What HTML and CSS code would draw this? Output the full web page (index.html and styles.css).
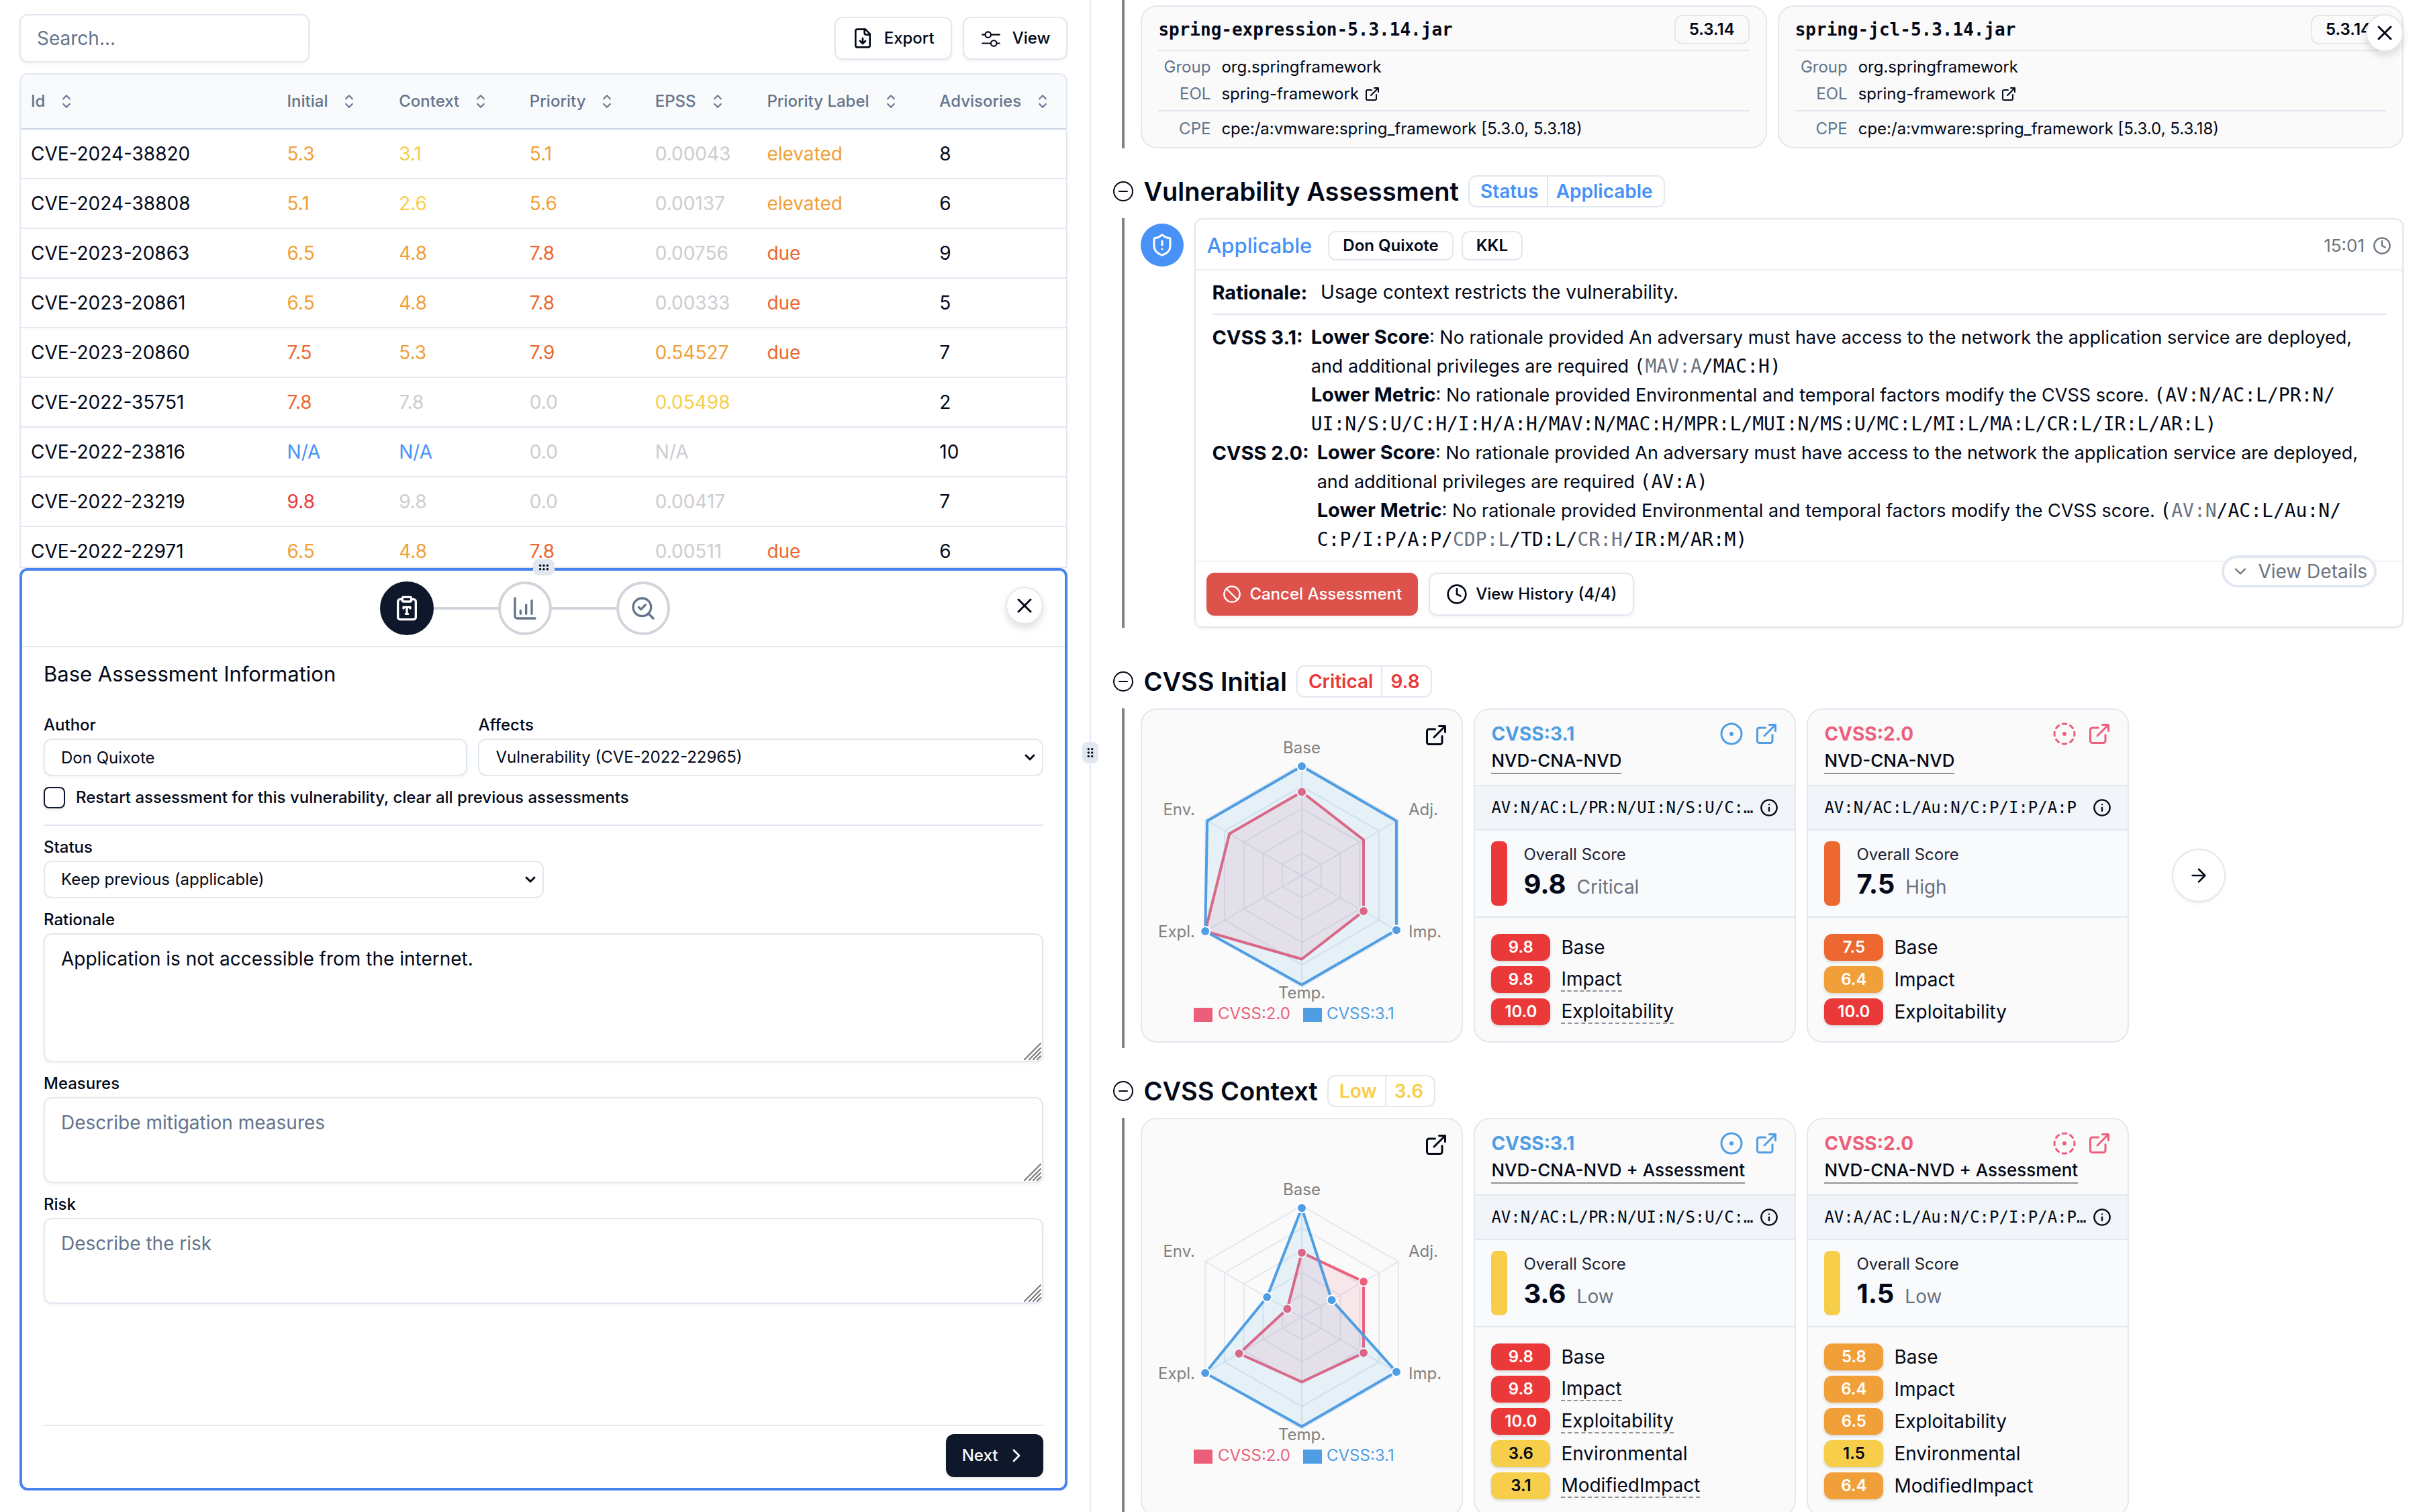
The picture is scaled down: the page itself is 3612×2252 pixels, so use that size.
FILE: index.html
```
<!DOCTYPE html>
<html lang="en">
<head>
<meta charset="utf-8">
<title>Vulnerability Assessment</title>
<link rel="stylesheet" href="styles.css">
</head>
<body>
<svg class="sprite" aria-hidden="true">
  <symbol id="i-sort" viewBox="0 0 15 15"><path fill="none" stroke="currentColor" stroke-width=".95" stroke-linecap="round" stroke-linejoin="round" d="M5.2 5.7 7.5 3.4l2.3 2.3M5.2 9.3l2.3 2.3 2.3-2.3"/></symbol>
  <symbol id="i-file" viewBox="0 0 24 24"><path d="M15 2H6a2 2 0 0 0-2 2v16a2 2 0 0 0 2 2h12a2 2 0 0 0 2-2V7Z"/><path d="M14 2v4a2 2 0 0 0 2 2h4M12 18v-6M9 15l3 3 3-3"/></symbol>
  <symbol id="i-mixer" viewBox="0 0 15 15"><path stroke-width="1" d="M1.5 5h2M7.5 5h6M1.5 11h6M11.5 11h2"/><circle cx="5.5" cy="5" r="2" stroke-width="1"/><circle cx="9.5" cy="11" r="2" stroke-width="1"/></symbol>
  <symbol id="i-clip" viewBox="0 0 24 24"><rect x="8" y="2" width="8" height="4" rx="1"/><path d="M16 4h2a2 2 0 0 1 2 2v14a2 2 0 0 1-2 2H6a2 2 0 0 1-2-2V6a2 2 0 0 1 2-2h2M9 12v-1h6v1M11 17h2M12 11v6"/></symbol>
  <symbol id="i-chart" viewBox="0 0 24 24"><path d="M13 17V9M18 17V5M3 3v16a2 2 0 0 0 2 2h16M8 17v-3"/></symbol>
  <symbol id="i-check" viewBox="0 0 24 24"><path d="m8 11 2 2 4-4M21 21l-4.3-4.3"/><circle cx="11" cy="11" r="8"/></symbol>
  <symbol id="i-x" viewBox="0 0 24 24"><path d="M18 6 6 18M6 6l12 12"/></symbol>
  <symbol id="i-down" viewBox="0 0 24 24"><path d="m6 9 6 6 6-6"/></symbol>
  <symbol id="i-right" viewBox="0 0 24 24"><path d="m9 18 6-6-6-6"/></symbol>
  <symbol id="i-arrow" viewBox="0 0 24 24"><path d="M5 12h14M12 5l7 7-7 7"/></symbol>
  <symbol id="i-open" viewBox="0 0 24 24"><path d="M15 3h6v6M10 14 21 3M18 13v6a2 2 0 0 1-2 2H5a2 2 0 0 1-2-2V8a2 2 0 0 1 2-2h6"/></symbol>
  <symbol id="i-minus" viewBox="0 0 32 32"><circle cx="16" cy="16" r="14" stroke-width="2"/><path stroke-width="2" d="M10 16h12"/></symbol>
  <symbol id="i-shield" viewBox="0 0 24 24"><path d="M20 13c0 5-3.5 7.5-7.66 8.95a1 1 0 0 1-.67-.01C7.5 20.5 4 18 4 13V6a1 1 0 0 1 1-1c2 0 4.5-1.2 6.24-2.72a1.17 1.17 0 0 1 1.52 0C14.51 3.81 17 5 19 5a1 1 0 0 1 1 1zM12 8v4M12 16h.01"/></symbol>
  <symbol id="i-clock" viewBox="0 0 24 24"><circle cx="12" cy="12" r="10"/><path d="M12 6v6l4 2"/></symbol>
  <symbol id="i-ban" viewBox="0 0 24 24"><circle cx="12" cy="12" r="10"/><path d="m4.9 4.9 14.2 14.2"/></symbol>
  <symbol id="i-info" viewBox="0 0 24 24"><circle cx="12" cy="12" r="10"/><path d="M12 16v-4M12 8h.01"/></symbol>
  <symbol id="i-dot" viewBox="0 0 24 24"><circle cx="12" cy="12" r="10"/><circle cx="12" cy="12" r="1"/></symbol>
  <symbol id="i-dash" viewBox="0 0 24 24"><path d="M10.1 2.18a9.93 9.93 0 0 1 3.8 0M17.6 3.71a9.95 9.95 0 0 1 2.69 2.7M21.82 10.1a9.93 9.93 0 0 1 0 3.8M20.29 17.6a9.95 9.95 0 0 1-2.7 2.69M13.9 21.82a9.94 9.94 0 0 1-3.8 0M6.4 20.29a9.95 9.95 0 0 1-2.69-2.7M2.18 13.9a9.93 9.93 0 0 1 0-3.8M3.71 6.4a9.95 9.95 0 0 1 2.7-2.69"/><circle cx="12" cy="12" r="1"/></symbol>
  <symbol id="i-grip" viewBox="0 0 16 12"><g fill="currentColor" stroke="none"><circle cx="2.6" cy="3.3" r="1.7"/><circle cx="8" cy="3.3" r="1.7"/><circle cx="13.4" cy="3.3" r="1.7"/><circle cx="2.6" cy="8.7" r="1.7"/><circle cx="8" cy="8.7" r="1.7"/><circle cx="13.4" cy="8.7" r="1.7"/></g></symbol>
  <symbol id="i-size" viewBox="0 0 26 26"><path stroke-width="2" d="M1 25 25 1M8 25 25 8M14 25l11-11M20 25l5-5"/></symbol>
  <symbol id="radar" viewBox="-220 -220 440 440"><g fill="none" stroke="#e2e8f0" stroke-width="2">
    <path d="M0-33.2 28.8-16.6V16.6L0 33.2-28.8 16.6V-16.6ZM0-66.4 57.5-33.2V33.2L0 66.4-57.5 33.2V-33.2ZM0-99.6 86.3-49.8V49.8L0 99.6-86.3 49.8V-49.8ZM0-132.8 115-66.4V66.4L0 132.8-115 66.4V-66.4ZM0-166 143.8-83V83L0 166-143.8 83V-83ZM0-166V166M-143.8-83 143.8 83M-143.8 83 143.8-83"/></g></symbol>
</svg>

<div class="app">
  <section class="left">
    <div class="list-panel">
      <div class="toolbar">
        <input class="search" type="text" placeholder="Search..." aria-label="Search">
        <button class="btn"><svg class="icon s32"><use href="#i-file"/></svg>Export</button>
        <button class="btn"><svg class="icon s32"><use href="#i-mixer"/></svg>View</button>
      </div>
      <div class="table-wrap">
        <table>
          <colgroup><col class="c-id"><col class="c-initial"><col class="c-context"><col class="c-priority"><col class="c-epss"><col class="c-label"><col></colgroup>
          <thead><tr>
            <th><span>Id<svg class="icon s32"><use href="#i-sort"/></svg></span></th>
            <th><span>Initial<svg class="icon s32"><use href="#i-sort"/></svg></span></th>
            <th><span>Context<svg class="icon s32"><use href="#i-sort"/></svg></span></th>
            <th><span>Priority<svg class="icon s32"><use href="#i-sort"/></svg></span></th>
            <th><span>EPSS<svg class="icon s32"><use href="#i-sort"/></svg></span></th>
            <th><span>Priority Label<svg class="icon s32"><use href="#i-sort"/></svg></span></th>
            <th><span>Advisories<svg class="icon s32"><use href="#i-sort"/></svg></span></th>
          </tr></thead>
          <tbody>
            <tr><td>CVE-2024-38820</td><td class="medium">5.3</td><td class="low">3.1</td><td class="medium">5.1</td><td class="none">0.00043</td><td class="medium">elevated</td><td>8</td></tr>
            <tr><td>CVE-2024-38808</td><td class="medium">5.1</td><td class="low">2.6</td><td class="medium">5.6</td><td class="none">0.00137</td><td class="medium">elevated</td><td>6</td></tr>
            <tr><td>CVE-2023-20863</td><td class="medium">6.5</td><td class="medium">4.8</td><td class="high">7.8</td><td class="none">0.00756</td><td class="high">due</td><td>9</td></tr>
            <tr><td>CVE-2023-20861</td><td class="medium">6.5</td><td class="medium">4.8</td><td class="high">7.8</td><td class="none">0.00333</td><td class="high">due</td><td>5</td></tr>
            <tr><td>CVE-2023-20860</td><td class="high">7.5</td><td class="medium">5.3</td><td class="high">7.9</td><td class="medium">0.54527</td><td class="high">due</td><td>7</td></tr>
            <tr><td>CVE-2022-35751</td><td class="high">7.8</td><td class="none">7.8</td><td class="none">0.0</td><td class="low">0.05498</td><td></td><td>2</td></tr>
            <tr><td>CVE-2022-23816</td><td class="info">N/A</td><td class="info">N/A</td><td class="none">0.0</td><td class="none">N/A</td><td></td><td>10</td></tr>
            <tr><td>CVE-2022-23219</td><td class="critical">9.8</td><td class="none">9.8</td><td class="none">0.0</td><td class="none">0.00417</td><td></td><td>7</td></tr>
            <tr><td>CVE-2022-22971</td><td class="medium">6.5</td><td class="medium">4.8</td><td class="high">7.8</td><td class="none">0.00511</td><td class="high">due</td><td>6</td></tr>
          </tbody>
        </table>
      </div>
    </div>

    <div class="editor-panel">
      <div class="grip grip-h"><svg class="icon dots"><use href="#i-grip"/></svg></div>
      <form class="editor" onsubmit="return false">
        <header class="editor-head">
          <div class="stepper">
            <span class="step active"><svg class="icon s40"><use href="#i-clip"/></svg></span>
            <span class="link"></span>
            <span class="step"><svg class="icon s40"><use href="#i-chart"/></svg></span>
            <span class="link"></span>
            <span class="step"><svg class="icon s40"><use href="#i-check"/></svg></span>
          </div>
          <button type="button" class="close" aria-label="Close editor"><svg class="icon s36"><use href="#i-x"/></svg></button>
        </header>
        <div class="editor-body">
          <h2>Base Assessment Information</h2>
          <div class="pair">
            <div class="field"><label for="author">Author</label><input id="author" type="text" value="Don Quixote"></div>
            <div class="field"><label for="affects">Affects</label><div class="select"><select id="affects"><option>Vulnerability (CVE-2022-22965)</option></select><svg class="icon s24"><use href="#i-down"/></svg></div></div>
          </div>
          <div class="tick"><input id="restart" type="checkbox"><label for="restart">Restart assessment for this vulnerability, clear all previous assessments</label></div>
          <hr>
          <div class="field half"><label for="status">Status</label><div class="select"><select id="status"><option>Keep previous (applicable)</option></select><svg class="icon s24"><use href="#i-down"/></svg></div></div>
          <div class="field"><label for="rationale">Rationale</label><div class="area tall"><textarea id="rationale">Application is not accessible from the internet.</textarea><svg class="icon size"><use href="#i-size"/></svg></div></div>
          <div class="field"><label for="measures">Measures</label><div class="area"><textarea id="measures" placeholder="Describe mitigation measures"></textarea><svg class="icon size"><use href="#i-size"/></svg></div></div>
          <div class="field"><label for="risk">Risk</label><div class="area"><textarea id="risk" placeholder="Describe the risk"></textarea><svg class="icon size"><use href="#i-size"/></svg></div></div>
          <footer class="editor-foot"><button type="submit" class="next">Next<svg class="icon s32"><use href="#i-right"/></svg></button></footer>
        </div>
      </form>
    </div>
  </section>

  <div class="divider"><div class="grip grip-v"><svg class="icon dots"><use href="#i-grip"/></svg></div></div>

  <main class="right">
    <button class="close page-close" aria-label="Close details"><svg class="icon s36"><use href="#i-x"/></svg></button>

    <section>
      <div class="section-body jars">
        <article class="card jar">
          <div class="jar-head"><h3>spring-expression-5.3.14.jar</h3><span class="badge">5.3.14</span></div>
          <dl><dt>Group</dt><dd>org.springframework</dd><dt>EOL</dt><dd><a href="#">spring-framework<svg class="icon s24"><use href="#i-open"/></svg></a></dd></dl>
          <dl class="cpe"><dt>CPE</dt><dd>cpe:/a:vmware:spring_framework [5.3.0, 5.3.18)</dd></dl>
        </article>
        <article class="card jar">
          <div class="jar-head"><h3>spring-jcl-5.3.14.jar</h3><span class="badge">5.3.14</span></div>
          <dl><dt>Group</dt><dd>org.springframework</dd><dt>EOL</dt><dd><a href="#">spring-framework<svg class="icon s24"><use href="#i-open"/></svg></a></dd></dl>
          <dl class="cpe"><dt>CPE</dt><dd>cpe:/a:vmware:spring_framework [5.3.0, 5.3.18)</dd></dl>
        </article>
      </div>
    </section>

    <section>
      <header class="section-head"><svg class="icon s32"><use href="#i-minus"/></svg><h2>Vulnerability Assessment</h2><div class="tag info"><span>Status</span><span>Applicable</span></div></header>
      <div class="section-body timeline">
        <span class="shield"><svg class="icon s36"><use href="#i-shield"/></svg></span>
        <article class="entry">
          <header class="entry-head"><strong>Applicable</strong><span class="badge">Don Quixote</span><span class="badge">KKL</span><time>15:01<svg class="icon s28"><use href="#i-clock"/></svg></time></header>
          <div class="entry-body">
            <div class="rationale"><b>Rationale:</b><span>Usage context restricts the vulnerability.</span></div>
            <div class="reasons">
              <div class="reason"><b>CVSS 3.1:</b>
                <div>
                  <p><b>Lower Score</b>: No rationale provided An adversary must have access to the network the application service are deployed, and additional privileges are required <code>(<i>MAV:A</i>/MAC:H)</code></p>
                  <p><b>Lower Metric</b>: No rationale provided Environmental and temporal factors modify the CVSS score. <code>(AV:N/AC:L/PR:N/<wbr>UI:N/S:U/C:H/I:H/A:H/MAV:N/MAC:H/MPR:L/MUI:N/MS:U/MC:L/MI:L/MA:L/CR:L/IR:L/AR:L)</code></p>
                </div>
              </div>
              <div class="reason"><b>CVSS 2.0:</b>
                <div>
                  <p><b>Lower Score</b>: No rationale provided An adversary must have access to the network the application service are deployed, and additional privileges are required <code>(AV:A)</code></p>
                  <p><b>Lower Metric</b>: No rationale provided Environmental and temporal factors modify the CVSS score. <code>(<i>AV:N</i>/AC:L/Au:N/<wbr>C:P/I:P/A:P/<i>CDP:L</i>/TD:L/<i>CR:H</i>/IR:M/AR:M)</code></p>
                </div>
              </div>
            </div>
          </div>
          <footer class="entry-foot">
            <button class="btn danger"><svg class="icon s28"><use href="#i-ban"/></svg>Cancel Assessment</button>
            <button class="btn tight"><svg class="icon s32"><use href="#i-clock"/></svg>View History (4/4)</button>
            <button class="details"><svg class="icon s28"><use href="#i-down"/></svg>View Details</button>
          </footer>
        </article>
      </div>
    </section>

    <section class="spaced">
      <header class="section-head"><svg class="icon s32"><use href="#i-minus"/></svg><h2>CVSS Initial</h2><div class="tag critical"><span>Critical</span><span>9.8</span></div></header>
      <div class="section-body scores">
        <article class="card chart">
          <a href="#" class="expand" aria-label="Open chart"><svg class="icon s36"><use href="#i-open"/></svg></a>
          <svg class="radar" viewBox="-220 -220 440 440">
            <use href="#radar" x="-220" y="-220" width="440" height="440"/>
            <path class="v2" d="M0-124.5 92-53.1V53.1L0 124.5-143.8 83-107.8-62.3Z"/>
            <g class="p2"><circle cx="0" cy="-124.5" r="7"/><circle cx="92" cy="53.1" r="7"/></g>
            <path class="v3" d="M0-162.7 140.9-81.3V81.3L0 162.7-143.8 83-140.9-81.3Z"/>
            <g class="p3"><circle cx="0" cy="-162.7" r="7"/><circle cx="140.9" cy="81.3" r="7"/><circle cx="-143.8" cy="83" r="7"/></g>
            <g class="axis"><text x="0" y="-182" text-anchor="middle">Base</text><text x="159" y="-90">Adj.</text><text x="159" y="92">Imp.</text><text x="0" y="183" text-anchor="middle">Temp.</text><text x="-159" y="92" text-anchor="end">Expl.</text><text x="-159" y="-90" text-anchor="end">Env.</text></g>
            <g class="legend"><rect class="k2" x="-161" y="197" width="28" height="21"/><text class="k2" x="-125" y="214">CVSS:2.0</text><rect class="k3" x="2" y="197" width="28" height="21"/><text class="k3" x="37" y="214">CVSS:3.1</text></g>
          </svg>
        </article>
        <article class="card score">
          <header class="blue"><div class="score-top"><b>CVSS:3.1</b><svg class="icon s36"><use href="#i-dot"/></svg><a href="#" aria-label="Open calculator"><svg class="icon s36"><use href="#i-open"/></svg></a></div><div class="source"><span>NVD-CNA-NVD</span></div></header>
          <div class="vector"><code>AV:N/AC:L/PR:N/UI:N/S:U/C:H/I:H/A:H</code><svg class="icon s28"><use href="#i-info"/></svg></div>
          <div class="overall"><span class="bar b-critical"></span><div><small>Overall Score</small><p><b>9.8</b>Critical</p></div></div>
          <ul><li><span class="pill b-critical">9.8</span><span>Base</span></li><li><span class="pill b-critical">9.8</span><abbr>Impact</abbr></li><li><span class="pill b-critical">10.0</span><abbr>Exploitability</abbr></li></ul>
        </article>
        <article class="card score">
          <header class="pink"><div class="score-top"><b>CVSS:2.0</b><svg class="icon s36"><use href="#i-dash"/></svg><a href="#" aria-label="Open calculator"><svg class="icon s36"><use href="#i-open"/></svg></a></div><div class="source"><span>NVD-CNA-NVD</span></div></header>
          <div class="vector"><code>AV:N/AC:L/Au:N/C:P/I:P/A:P</code><svg class="icon s28"><use href="#i-info"/></svg></div>
          <div class="overall"><span class="bar b-high"></span><div><small>Overall Score</small><p><b>7.5</b>High</p></div></div>
          <ul><li><span class="pill b-high">7.5</span><span>Base</span></li><li><span class="pill b-medium">6.4</span><span>Impact</span></li><li><span class="pill b-critical">10.0</span><span>Exploitability</span></li></ul>
        </article>
        <button class="forward" aria-label="Next scores"><svg class="icon s32"><use href="#i-arrow"/></svg></button>
      </div>
    </section>

    <section>
      <header class="section-head"><svg class="icon s32"><use href="#i-minus"/></svg><h2>CVSS Context</h2><div class="tag low"><span>Low</span><span>3.6</span></div></header>
      <div class="section-body scores">
        <article class="card chart">
          <a href="#" class="expand" aria-label="Open chart"><svg class="icon s36"><use href="#i-open"/></svg></a>
          <svg class="radar" viewBox="-220 -220 440 440">
            <use href="#radar" x="-220" y="-220" width="440" height="440"/>
            <path class="v2" d="M0-96.3 92-53.1V53.1L0 96.3-93.4 54-21.6-12.5Z"/>
            <g class="p2"><circle cx="0" cy="-96.3" r="7"/><circle cx="92" cy="-53.1" r="7"/><circle cx="92" cy="53.1" r="7"/><circle cx="-93.4" cy="54" r="7"/><circle cx="-21.6" cy="-12.5" r="7"/></g>
            <path class="v3" d="M0-162.7 44.6-25.7 140.9 81.3 0 162.7-143.8 83-51.8-29.9Z"/>
            <g class="p3"><circle cx="0" cy="-162.7" r="7"/><circle cx="44.6" cy="-25.7" r="7"/><circle cx="140.9" cy="81.3" r="7"/><circle cx="-143.8" cy="83" r="7"/><circle cx="-51.8" cy="-29.9" r="7"/></g>
            <g class="axis"><text x="0" y="-182" text-anchor="middle">Base</text><text x="159" y="-90">Adj.</text><text x="159" y="92">Imp.</text><text x="0" y="183" text-anchor="middle">Temp.</text><text x="-159" y="92" text-anchor="end">Expl.</text><text x="-159" y="-90" text-anchor="end">Env.</text></g>
            <g class="legend"><rect class="k2" x="-161" y="197" width="28" height="21"/><text class="k2" x="-125" y="214">CVSS:2.0</text><rect class="k3" x="2" y="197" width="28" height="21"/><text class="k3" x="37" y="214">CVSS:3.1</text></g>
          </svg>
        </article>
        <article class="card score">
          <header class="blue"><div class="score-top"><b>CVSS:3.1</b><svg class="icon s36"><use href="#i-dot"/></svg><a href="#" aria-label="Open calculator"><svg class="icon s36"><use href="#i-open"/></svg></a></div><div class="source"><span>NVD-CNA-NVD + Assessment</span></div></header>
          <div class="vector"><code>AV:N/AC:L/PR:N/UI:N/S:U/C:H/I:H/A:H</code><svg class="icon s28"><use href="#i-info"/></svg></div>
          <div class="overall"><span class="bar b-low"></span><div><small>Overall Score</small><p><b>3.6</b>Low</p></div></div>
          <ul><li><span class="pill b-critical">9.8</span><span>Base</span></li><li><span class="pill b-critical">9.8</span><abbr>Impact</abbr></li><li><span class="pill b-critical">10.0</span><abbr>Exploitability</abbr></li><li><span class="pill b-low">3.6</span><span>Environmental</span></li><li><span class="pill b-low">3.1</span><abbr>ModifiedImpact</abbr></li></ul>
        </article>
        <article class="card score">
          <header class="pink"><div class="score-top"><b>CVSS:2.0</b><svg class="icon s36"><use href="#i-dash"/></svg><a href="#" aria-label="Open calculator"><svg class="icon s36"><use href="#i-open"/></svg></a></div><div class="source"><span>NVD-CNA-NVD + Assessment</span></div></header>
          <div class="vector"><code>AV:A/AC:L/Au:N/C:P/I:P/A:P/CDP:L/TD:L</code><svg class="icon s28"><use href="#i-info"/></svg></div>
          <div class="overall"><span class="bar b-low"></span><div><small>Overall Score</small><p><b>1.5</b>Low</p></div></div>
          <ul><li><span class="pill b-medium">5.8</span><span>Base</span></li><li><span class="pill b-medium">6.4</span><span>Impact</span></li><li><span class="pill b-medium">6.5</span><span>Exploitability</span></li><li><span class="pill b-low">1.5</span><span>Environmental</span></li><li><span class="pill b-medium">6.4</span><span>ModifiedImpact</span></li></ul>
        </article>
      </div>
    </section>
  </main>
</div>
</body>
</html>
```
FILE: styles.css
```
:root {
  --line: #e2e8f0;
  --ink: #020817;
  --muted: #64748b;
  --critical: #eb3939;
  --high: #ed6730;
  --medium: #f19f39;
  --low: #f7ce49;
  --none: #cbcdd0;
  --info: #4891f7;
  --blue: #4f9de3;
  --pink: #ec5f7b;
  --mono: "DejaVu Sans Mono", "Liberation Mono", monospace;
}

* { box-sizing: border-box; margin: 0; padding: 0; }

body {
  font: 400 28px/40px Inter, "Liberation Sans", sans-serif;
  color: var(--ink);
  background: #fff;
}

button, input, select, textarea { font: inherit; color: inherit; }
a { color: inherit; text-decoration: none; }
.sprite { position: absolute; width: 0; height: 0; }

.icon { flex: none; fill: none; stroke: currentColor; stroke-width: 2; stroke-linecap: round; stroke-linejoin: round; }
.s24 { width: 24px; height: 24px; }
.s28 { width: 28px; height: 28px; }
.s32 { width: 32px; height: 32px; }
.s36 { width: 36px; height: 36px; }
.s40 { width: 40px; height: 40px; }

.app { display: flex; height: 100vh; overflow: hidden; }

/* Left: table above the assessment editor */
.left { flex: 0 0 45%; min-width: 0; display: flex; flex-direction: column; padding: 0 35px 32px 29px; }
.list-panel { flex: 846 1 0; min-height: 0; display: flex; flex-direction: column; gap: 16px; }
.toolbar { display: flex; align-items: center; gap: 16px; margin-top: 21px; }
.search { width: 432px; height: 72px; margin-right: auto; padding: 0 24px; }
.search, .field input, .field select, textarea {
  border: 2px solid var(--line); border-radius: 12px; background: #fff; box-shadow: 0 2px 4px rgba(0, 0, 0, .05);
}
::placeholder { color: var(--muted); opacity: 1; }

.btn {
  display: flex; align-items: center; gap: 16px; height: 64px; padding: 0 24px;
  border: 2px solid var(--line); border-radius: 12px; background: #fff;
  font-size: 24px; font-weight: 500; box-shadow: 0 2px 4px rgba(0, 0, 0, .06);
}
.btn.tight { gap: 12px; }
.btn.danger { gap: 12px; border: 0; background: #de524c; color: #fff; }

.table-wrap { flex: 1; min-height: 0; overflow: hidden; border: 2px solid var(--line); border-radius: 12px 12px 0 0; }
table { width: 100%; table-layout: fixed; border-collapse: separate; border-spacing: 0; }
.c-id { width: 24.5%; }
.c-initial { width: 10.7%; }
.c-context { width: 12.5%; }
.c-priority { width: 12%; }
.c-epss { width: 10.7%; }
.c-label { width: 16.5%; }
th { height: 82px; padding: 0 15px; background: #f8fafc; border-bottom: 2px solid #cbd5e1; color: var(--muted); font-size: 24px; font-weight: 500; text-align: left; }
th span { display: flex; align-items: center; gap: 16px; white-space: nowrap; }
td { height: 74px; padding: 0 15px; border-bottom: 2px solid var(--line); }

.critical { color: var(--critical); }
.high { color: var(--high); }
.medium { color: var(--medium); }
.low { color: var(--low); }
.none { color: var(--none); }
.info { color: var(--info); }

.editor-panel { flex: 1374 1 0; min-height: 0; position: relative; }
.editor { height: 100%; display: flex; flex-direction: column; border: 4px solid #4883ec; border-radius: 12px; background: #fff; }
.grip { position: absolute; display: flex; align-items: center; justify-content: center; border-radius: 8px; background: var(--line); }
.grip-h { width: 32px; height: 24px; top: -13px; left: calc(50% - 16px); z-index: 1; }
.grip-v { width: 24px; height: 32px; top: calc(50% - 21px); left: -11px; z-index: 1; }
.grip-v .dots { transform: rotate(90deg); }
.dots { width: 16px; height: 12px; }

.editor-head { display: flex; align-items: center; padding: 16px 32px; border-bottom: 2px solid var(--line); }
.editor-head .close { align-self: flex-start; margin-top: 8px; }
.stepper { flex: 1; display: flex; align-items: center; justify-content: center; }
.step { width: 80px; height: 80px; display: flex; align-items: center; justify-content: center; border: 4px solid #d1d5db; border-radius: 50%; color: var(--muted); }
.step.active { border-color: #0f172a; background: #0f172a; color: #fff; }
.link { width: 96px; height: 4px; background: #d1d5db; }
.close { width: 56px; height: 56px; display: flex; align-items: center; justify-content: center; border: 2px solid var(--line); border-radius: 50%; background: #fff; box-shadow: 0 6px 12px rgba(0, 0, 0, .12); }

.editor-body { flex: 1; min-height: 0; display: flex; flex-direction: column; padding: 16px 32px; }
.editor-body h2 { margin-bottom: 40px; font-size: 31px; line-height: 48px; font-weight: 400; }
.pair { display: grid; grid-template-columns: 3fr 4fr; gap: 16px; }
.pair .field { margin: 0; }
.field { display: flex; flex-direction: column; gap: 8px; margin-bottom: 20px; }
.field label, .tick label { font-size: 24px; line-height: 24px; font-weight: 500; }
.field input, .field select { width: 100%; height: 56px; padding: 0 24px; font-size: 24px; }
.field select { appearance: none; box-shadow: none; }
.select, .area { position: relative; display: flex; }
.select .icon { position: absolute; right: 8px; top: 16px; pointer-events: none; stroke-width: 3; }
.half { width: 50%; }
.tick { display: flex; align-items: center; gap: 16px; margin: 16px 0 24px; }
.tick input { appearance: none; width: 32px; height: 32px; border: 2px solid #0f172a; border-radius: 8px; box-shadow: 0 2px 4px rgba(0, 0, 0, .1); }
hr { flex: none; height: 2px; margin-bottom: 20px; border: 0; background: var(--line); }
textarea { width: 100%; height: 128px; padding: 16px 24px; resize: none; }
.tall textarea { height: 192px; }
.area .size { position: absolute; right: 3px; bottom: 3px; width: 26px; height: 26px; color: #777; }
.editor-foot { display: flex; justify-content: flex-end; margin-top: auto; padding-top: 12px; border-top: 2px solid var(--line); }
.next { display: flex; align-items: center; gap: 12px; height: 64px; padding: 0 24px; border: 0; border-radius: 12px; background: #0f172a; color: #f8fafc; font-size: 24px; font-weight: 500; box-shadow: 0 2px 4px rgba(0, 0, 0, .1); }

.divider { flex: 0 0 2px; position: relative; margin-left: -2px; background: var(--line); }

/* Right: details of the selected vulnerability */
.right { flex: 1; min-width: 0; position: relative; overflow: hidden; padding: 0 32px; }
.page-close { position: absolute; top: 21px; right: 32px; z-index: 1; }
.section-head { display: flex; align-items: center; gap: 14px; height: 48px; margin: 40px 0 16px; }
.spaced .section-head { margin-top: 56px; }
.section-head h2 { font-size: 38px; line-height: 48px; font-weight: 600; }
.tag { display: flex; height: 48px; border: 2px solid var(--line); border-radius: 12px; font-weight: 600; line-height: 44px; }
.tag span { padding: 0 12px 0 16px; }
.tag span + span { padding: 0 16px 0 12px; border-left: 2px solid var(--line); }
.section-body { margin-left: 14px; padding-left: 24px; border-left: 4px solid #808289; display: flex; gap: 16px; }
.card { border: 2px solid var(--line); border-radius: 24px; background: #fafafa; overflow: hidden; }
.badge { display: flex; align-items: center; height: 44px; padding: 0 20px; border: 2px solid var(--line); border-radius: 12px; font-size: 24px; font-weight: 600; }

.jars { padding-top: 8px; }
.jar { flex: 1; padding: 12px 24px 1px; }
.jar-head { display: flex; align-items: center; justify-content: space-between; padding-bottom: 8px; border-bottom: 2px solid var(--line); }
.jar h3 { font: 700 26px/44px var(--mono); }
dl { display: grid; grid-template-columns: 78px 1fr; column-gap: 16px; padding: 4px 0; font-size: 24px; }
.cpe { padding: 6px 0; border-top: 2px solid var(--line); }
dt { color: var(--muted); text-align: right; }
dd a { display: flex; align-items: center; gap: 8px; }

.shield { flex: none; width: 64px; height: 64px; margin-top: 8px; display: flex; align-items: center; justify-content: center; border-radius: 50%; background: var(--info); color: #fff; }
.entry { flex: 1; min-width: 0; border: 2px solid #e5e7eb; border-radius: 12px; box-shadow: 0 2px 4px rgba(0, 0, 0, .06); }
.entry-head { display: flex; align-items: center; padding: 17px 16px 12px; border-bottom: 4px solid #f3f4f6; gap: 12px; }
.entry-head strong { margin-right: 12px; color: var(--info); font-size: 31px; font-weight: 500; }
.entry-head time { display: flex; align-items: center; gap: 12px; margin-left: auto; color: #6b7280; font-size: 26px; }
.entry-body { padding: 0 24px; line-height: 43px; }
.entry-body b { font-size: 29px; }
.entry-body p b { line-height: 1; }
.rationale { display: flex; gap: 20px; padding: 10px 0; border-bottom: 2px solid var(--line); }
.reasons { padding: 12px 20px 10px 0; font-size: 27px; }
.reason { display: flex; gap: 12px; }
.reason > b { flex: none; }
.reason code { font: 28px/1 var(--mono); }
.reason i { color: #6b7280; font-style: normal; }
.entry-foot { position: relative; display: flex; gap: 16px; padding: 16px; border-top: 2px solid #f3f4f6; }
.details { position: absolute; top: -10px; right: 38px; display: flex; align-items: center; gap: 12px; height: 48px; padding: 0 10px; border: 4px solid var(--line); border-radius: 24px; background: #fff; color: #6b7280; }

.scores { padding-bottom: 8px; }
.chart, .score { flex: none; width: 480px; }
.chart { position: relative; display: flex; align-items: center; justify-content: center; }
.expand { position: absolute; top: 20px; right: 20px; height: 36px; display: flex; }
.radar { width: 440px; height: 440px; font-size: 24px; }
.v2, .v3 { stroke-width: 4; stroke-linejoin: round; fill-opacity: .12; }
.v2 { stroke: var(--pink); fill: var(--pink); }
.v3 { stroke: var(--blue); fill: #4fafe3; }
.p2, .p3 { stroke: #fff; stroke-width: 2; }
.p2, .k2 { fill: var(--pink); }
.p3, .k3 { fill: var(--blue); }
.axis { fill: #808080; }

.score header { padding: 16px 24px; border-bottom: 2px solid var(--line); }
.score-top { display: flex; align-items: center; gap: 16px; height: 40px; }
.score-top b { margin-right: auto; font-weight: 700; }
.score-top a { display: flex; }
.blue { color: var(--blue); }
.pink { color: var(--pink); }
.source { height: 40px; color: var(--ink); font-size: 26px; font-weight: 500; }
.source span { display: inline-block; line-height: 36px; border-bottom: 2px solid #92929b; }
.vector { display: flex; align-items: center; gap: 8px; height: 66px; padding: 0 24px; border-bottom: 2px solid var(--line); background: #f1f5f9; }
.vector code { flex: 1; min-width: 0; overflow: hidden; text-overflow: ellipsis; white-space: nowrap; font: 24px/40px var(--mono); }
.overall { display: flex; gap: 24px; padding: 16px 24px; border-bottom: 2px solid var(--line); background: #f8fafc; }
.bar { width: 24px; height: 96px; border-radius: 8px; }
.overall small { display: block; font-size: 24px; line-height: 40px; color: #1b2130; }
.overall p { display: flex; align-items: baseline; gap: 16px; line-height: 48px; color: #6b7280; }
.overall p b { color: var(--ink); font-size: 40px; font-weight: 700; }
.score ul { list-style: none; display: grid; gap: 8px; padding: 24px; }
.score li { display: flex; align-items: center; gap: 16px; height: 40px; }
.score abbr { line-height: 34px; border-bottom: 2px dashed #92929b; }
.pill { min-width: 88px; height: 40px; border-radius: 12px; color: #fff; font-size: 24px; font-weight: 600; text-align: center; box-shadow: 0 2px 4px rgba(0, 0, 0, .15); }
.b-critical { background: var(--critical); }
.b-high { background: var(--high); }
.b-medium { background: var(--medium); }
.b-low { background: var(--low); }
.pill.b-low { color: var(--ink); }
.forward { align-self: center; width: 80px; height: 80px; margin-left: 48px; display: flex; align-items: center; justify-content: center; border: 2px solid var(--line); border-radius: 50%; background: #fff; box-shadow: 0 2px 4px rgba(0, 0, 0, .06); }
```
